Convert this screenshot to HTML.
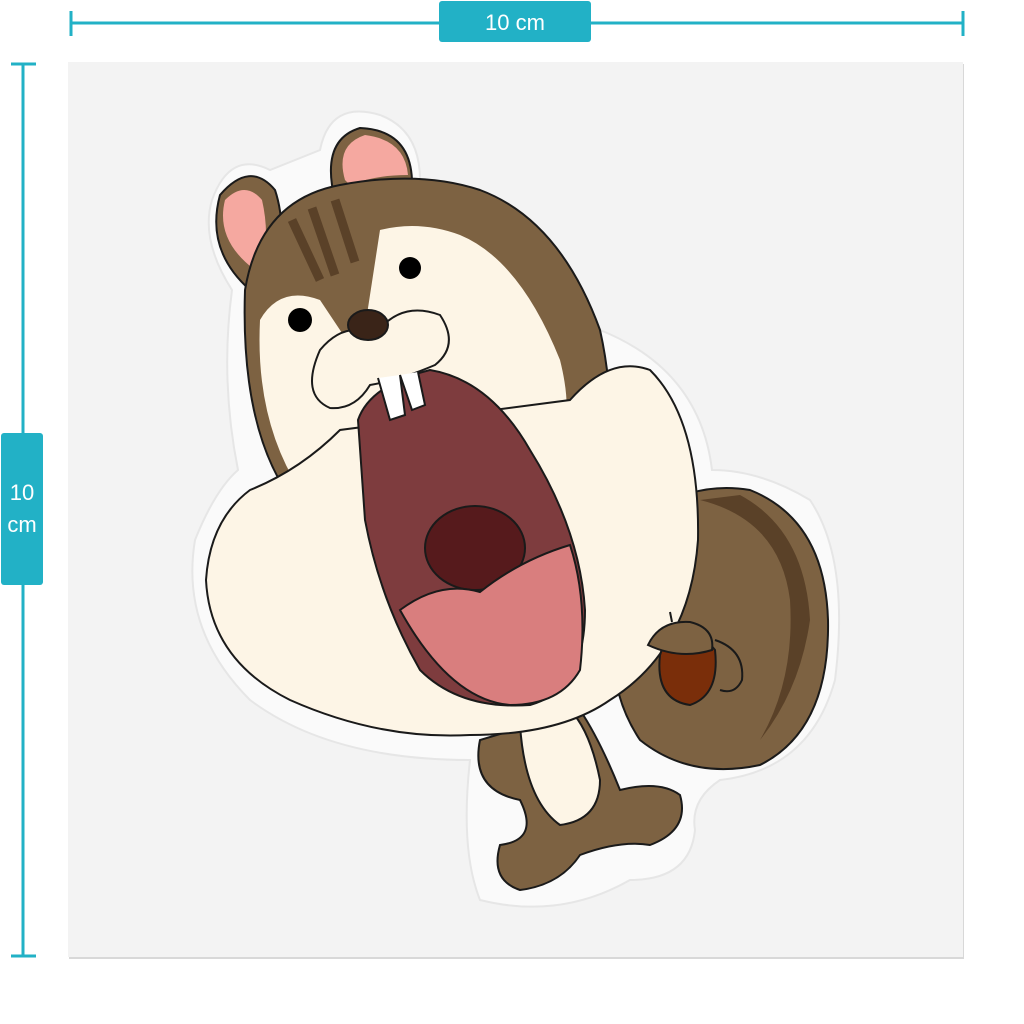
<!DOCTYPE html>
<html><head><style>
html,body{margin:0;padding:0;background:#fff;width:1024px;height:1024px;overflow:hidden;font-family:"Liberation Sans",sans-serif}
</style></head><body>
<svg width="1024" height="1024" viewBox="0 0 1024 1024" xmlns="http://www.w3.org/2000/svg">
<rect x="69" y="64" width="895" height="895" fill="#d8d8d8"/>
<rect x="68" y="62" width="895" height="895" fill="#f3f3f3"/>
<!-- rulers -->
<g stroke="#22b1c6" stroke-width="3">
<line x1="71" y1="23" x2="963" y2="23"/><line x1="71" y1="11" x2="71" y2="36"/><line x1="963" y1="11" x2="963" y2="36"/>
<line x1="23" y1="64" x2="23" y2="956"/><line x1="11" y1="64" x2="36" y2="64"/><line x1="11" y1="956" x2="36" y2="956"/>
</g>
<rect x="439" y="1" width="152" height="41" rx="3" fill="#22b1c6"/>
<text x="515" y="30" font-size="22" fill="#fff" text-anchor="middle" font-family="Liberation Sans">10 cm</text>
<rect x="1" y="433" width="42" height="152" rx="3" fill="#22b1c6"/>
<text x="22" y="500" font-size="22" fill="#fff" text-anchor="middle">10</text>
<text x="22" y="532" font-size="22" fill="#fff" text-anchor="middle">cm</text>
<!-- sticker outline -->
<path d="M212 200 Q230 150 270 170 L320 150 Q330 100 380 115 Q420 130 420 180 Q540 200 600 330 Q700 370 712 470 Q760 470 810 500 Q850 560 835 680 Q810 770 720 780 Q690 800 695 830 Q690 880 630 880 Q560 920 480 900 Q460 850 470 760 Q330 760 250 700 Q180 630 195 540 Q215 490 238 470 Q220 380 232 290 Q200 240 212 200Z" fill="#fafafa" stroke="#e6e6e6" stroke-width="2"/>
<g stroke="#1a1a1a" stroke-width="2">
<!-- tail -->
<path d="M640 520 Q690 480 750 490 Q825 520 828 620 Q830 730 760 765 Q690 780 640 740 Q600 680 620 600Z" fill="#7d6242"/>
<path d="M700 500 Q780 520 790 600 Q795 680 760 740 Q800 690 810 620 Q805 530 740 495Z" fill="#5a4128" stroke="none"/>
<!-- legs -->
<path d="M480 740 Q470 790 520 800 Q540 840 500 845 Q490 880 520 890 Q560 885 580 855 Q620 840 650 845 Q690 830 680 795 Q660 780 620 790 Q600 740 580 710Z" fill="#7d6242"/>
<path d="M520 725 Q525 800 560 825 Q600 820 600 780 Q590 730 570 710Z" fill="#fdf5e6"/>
<!-- ears -->
<path d="M250 290 Q205 250 220 195 Q250 160 275 190 Q285 220 280 260Z" fill="#7d6242"/>
<path d="M255 270 Q215 240 225 200 Q245 180 262 200 Q270 235 262 265Z" fill="#f5a8a0" stroke="none"/>
<path d="M335 200 Q320 140 360 128 Q410 130 412 180 Q380 200 345 210Z" fill="#7d6242"/>
<path d="M345 180 Q335 145 365 135 Q405 140 408 175 Q375 175 350 185Z" fill="#f5a8a0" stroke="none"/>
<!-- head -->
<path d="M245 290 Q260 200 340 185 Q420 170 480 190 Q560 220 600 330 Q620 420 600 500 L300 510 Q240 440 245 290Z" fill="#7d6242"/>
<path d="M292 220 L320 280 M312 208 L335 275 M335 200 L355 262" stroke="#5a4128" stroke-width="9" fill="none"/>
<!-- face cream -->
<path d="M260 320 Q280 285 320 300 Q340 330 360 360 L380 230 Q420 220 460 235 Q520 260 560 360 Q570 400 565 425 Q520 480 470 470 L300 490 Q255 420 260 320Z" fill="#fdf5e6" stroke="none"/>
<!-- cheeks -->
<path d="M250 490 Q210 520 206 580 Q210 660 290 700 Q380 740 470 735 Q560 735 610 700 Q690 650 698 540 Q700 420 650 370 Q610 355 570 400 L340 430 Q300 470 250 490Z" fill="#fdf5e6"/>
<!-- mouth -->
<path d="M358 420 Q370 385 430 370 Q490 380 530 450 Q580 530 585 610 Q585 690 530 705 Q460 710 420 670 Q380 600 365 520Z" fill="#7e3c3e"/>
<ellipse cx="475" cy="548" rx="50" ry="42" fill="#561a1c"/>
<path d="M400 610 Q440 580 480 592 Q520 560 570 545 Q588 600 580 670 Q560 705 510 705 Q450 700 400 610Z" fill="#d97e7e"/>
<!-- muzzle -->
<path d="M320 350 Q345 320 375 335 Q400 300 440 315 Q460 345 435 365 Q400 380 370 385 Q355 410 330 408 Q300 395 320 350Z" fill="#fdf5e6"/>
<path d="M378 378 L390 420 L405 415 L400 375 M400 375 L412 410 L425 405 L418 372" fill="#fff"/>
<ellipse cx="368" cy="325" rx="20" ry="15" fill="#3a2418"/>
<circle cx="300" cy="320" r="12" fill="#000" stroke="none"/>
<circle cx="410" cy="268" r="11" fill="#000" stroke="none"/>
<!-- acorn -->
<path d="M660 655 Q655 700 690 705 Q720 695 715 650 Q700 630 665 640Z" fill="#7a2e0a"/>
<path d="M648 645 Q660 620 690 622 Q715 628 712 650 Q680 660 648 645Z" fill="#7d6242"/>
<path d="M670 612 L672 622" />
<path d="M715 640 Q745 650 742 680 Q735 695 720 690" fill="none"/>
</g>
</svg>
</body></html>
